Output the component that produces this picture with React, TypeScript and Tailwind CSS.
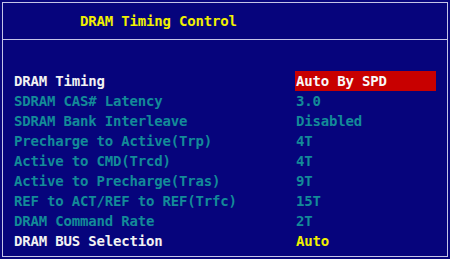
const rows = [
  { label: "DRAM Timing", value: "Auto By SPD", kind: "selected" },
  { label: "SDRAM CAS# Latency", value: "3.0", kind: "locked" },
  { label: "SDRAM Bank Interleave", value: "Disabled", kind: "locked" },
  { label: "Precharge to Active(Trp)", value: "4T", kind: "locked" },
  { label: "Active to CMD(Trcd)", value: "4T", kind: "locked" },
  { label: "Active to Precharge(Tras)", value: "9T", kind: "locked" },
  { label: "REF to ACT/REF to REF(Trfc)", value: "15T", kind: "locked" },
  { label: "DRAM Command Rate", value: "2T", kind: "locked" },
  { label: "DRAM BUS Selection", value: "Auto", kind: "normal" },
];

function SetupRow({ label, value, kind }: { label: string; value: string; kind: string }) {
  const labelColor = kind === "locked" ? "text-[#138b98]" : "text-[#f2f2f2]";
  const valueClass =
    kind === "selected"
      ? "bg-[#c80000] text-[#f8f8f8]"
      : kind === "locked"
        ? "text-[#138b98]"
        : "text-[#f0f000]";

  return (
    <div className="flex h-[20px] items-center">
      <div className={`w-[292px] pl-[11px] ${labelColor}`}>{label}</div>
      <div className={`flex h-[20px] w-[141px] items-center pl-[1px] ${valueClass}`}>{value}</div>
    </div>
  );
}

export default function App() {
  return (
    <div
      className="h-[259px] w-[450px] bg-[#08067e] pl-[2px] pt-[2px] text-[14px] font-bold leading-[20px] tracking-[-0.18px]"
      style={{ fontFamily: '"DejaVu Sans Mono", "Liberation Mono", monospace' }}
    >
      <div className="h-[255px] w-[446px] border border-[#c4c4e8] bg-[#06047c]">
        <div className="flex h-[37px] items-center border-b border-[#c4c4e8] pl-[77px] text-[#f0f000]">
          DRAM Timing Control
        </div>
        <div className="pt-[31px]">
          {rows.map((r) => (
            <SetupRow key={r.label} {...r} />
          ))}
        </div>
      </div>
    </div>
  );
}
